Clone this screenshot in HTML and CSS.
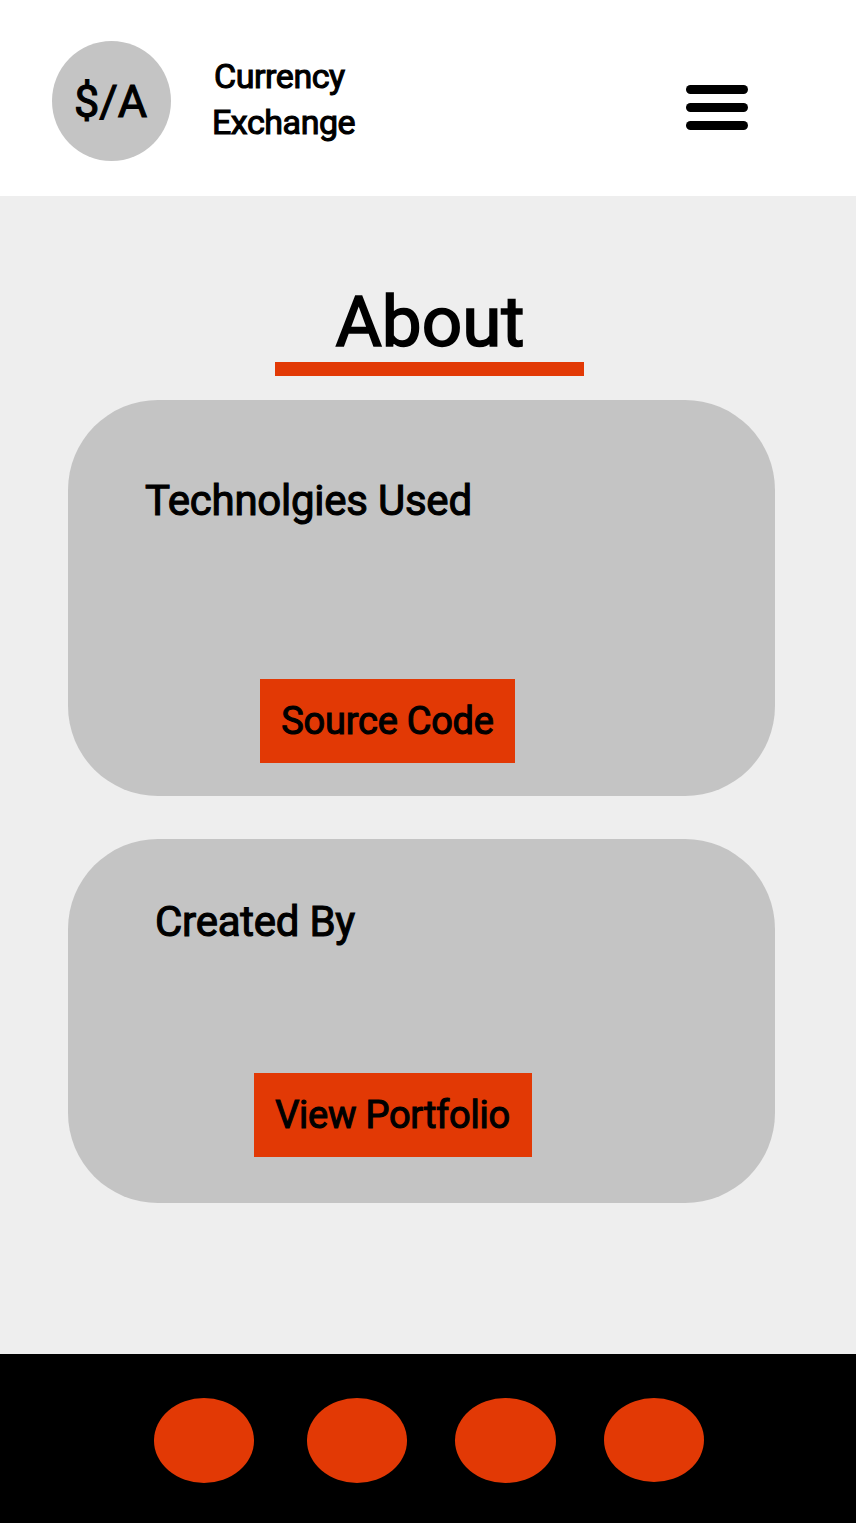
FILE: index.html
```html
<!DOCTYPE html>
<html lang="en">
<head>
<meta charset="utf-8">
<title>Currency Exchange - About</title>
<link rel="stylesheet" href="styles.css">
</head>
<body>
<header class="header">
  <div class="logo">$/A</div>
  <div class="brand"><span class="brand-first">Currency</span><span>Exchange</span></div>
  <svg class="menu" viewBox="0 0 62 46" role="img" aria-label="Menu">
    <rect width="62" height="9" rx="4.5"/>
    <rect y="18" width="62" height="9" rx="4.5"/>
    <rect y="36" width="62" height="9" rx="4.5"/>
  </svg>
</header>
<main class="main">
  <h1 class="title">About</h1>
  <section class="card tech">
    <h2 class="card-title">Technolgies Used</h2>
    <a class="button">Source Code</a>
  </section>
  <section class="card author">
    <h2 class="card-title">Created By</h2>
    <a class="button">View Portfolio</a>
  </section>
</main>
<footer class="footer">
  <span class="dot"></span><span class="dot"></span><span class="dot"></span><span class="dot"></span>
</footer>
</body>
</html>
```
FILE: styles.css
```css
* { box-sizing: border-box; }
body { margin: 0; width: 856px; height: 1523px; display: flex; flex-direction: column; background: #eee; color: #000; font-family: Roboto, sans-serif; -webkit-text-stroke: 1.1px #000; }
.header { height: 196px; background: #fff; display: flex; align-items: flex-start; padding: 41px 108px 0 52px; }
.logo { width: 119px; height: 120px; border-radius: 50%; background: #c4c4c4; font-size: 45px; line-height: 122px; padding-right: 2px; text-align: center; }
.brand { display: flex; flex-direction: column; margin: 12px 0 0 41px; font-size: 34px; line-height: 46px; letter-spacing: -.45px; }
.brand-first { padding-left: 2px; }
.menu { width: 62px; height: 46px; margin: 44px 0 0 auto; }
.main { height: 1158px; padding: 84px 81px 0 68px; display: flex; flex-direction: column; }
.title { margin: 0 0 24px 207px; width: 309px; height: 96px; border-bottom: 14px solid #e23905; text-align: center; font-size: 71px; line-height: 83px; font-weight: 400; padding-left: 1px; -webkit-text-stroke-width: 1.7px; }
.card { background: #c4c4c4; border-radius: 90px; display: flex; flex-direction: column; align-items: flex-start; justify-content: space-between; }
.card-title { margin: 0; font-size: 42px; line-height: 50px; font-weight: 400; letter-spacing: -.25px; }
.tech { height: 396px; padding: 76px 0 33px 77px; }
.author { height: 363.5px; margin-top: 43px; padding: 58px 0 45.5px 87px; }
.button { height: 84px; line-height: 84px; font-size: 38px; text-align: center; background: #e23905; letter-spacing: -.25px; }
.tech .button { width: 255px; margin-left: 115px; }
.author .button { width: 278px; margin-left: 99px; padding-right: 1px; }
.footer { height: 169px; background: #000; display: flex; padding: 44px 0 0 154px; gap: 48px; }
.dot { width: 100.3px; height: 85px; border-radius: 50%; background: #e23905; }
.dot:first-child { margin-right: 4.7px; }
.dot:last-child { height: 84px; }
```
